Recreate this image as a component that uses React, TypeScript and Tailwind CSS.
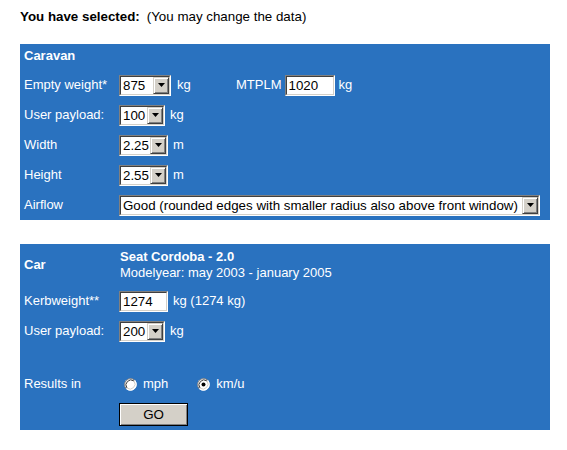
import React from "react";

function Arrow() {
  return (
    <svg width="7" height="4" viewBox="0 0 7 4">
      <path d="M0 0H7L3.5 4Z" fill="#000" />
    </svg>
  );
}

function Select({ value, className }: { value: string; className: string }) {
  return (
    <div
      className={
        "flex h-[21px] shrink-0 border border-t-[#808080] border-l-[#808080] border-b-white border-r-white bg-white text-[13.33px] " +
        className
      }
    >
      <div className="flex min-w-0 flex-1 border border-t-[#404040] border-l-[#404040] border-b-[#d4d0c8] border-r-[#d4d0c8]">
        <span className="flex-1 overflow-hidden whitespace-nowrap pl-[2px] leading-[17px] text-black">{value}</span>
        <div className="flex h-[17px] w-[16px] shrink-0 items-center justify-center border border-t-[#d4d0c8] border-l-[#d4d0c8] border-b-[#404040] border-r-[#404040] bg-[#d4d0c8] shadow-[inset_1px_1px_0_#fff,inset_-1px_-1px_0_#808080]">
          <Arrow />
        </div>
      </div>
    </div>
  );
}

function Input({ value, className }: { value: string; className: string }) {
  return (
    <div
      className={
        "flex h-[21px] shrink-0 border border-t-[#808080] border-l-[#808080] border-b-white border-r-white bg-white text-[13.33px] " +
        className
      }
    >
      <div className="flex-1 border border-t-[#404040] border-l-[#404040] border-b-[#d4d0c8] border-r-[#d4d0c8] pl-[2px] leading-[17px] text-black">
        {value}
      </div>
    </div>
  );
}

function Radio({ checked }: { checked?: boolean }) {
  return (
    <svg width="13" height="13" viewBox="0 0 13 13" className="shrink-0">
      <circle cx="6.5" cy="6.5" r="6" fill="#fff" />
      <path d="M2.26 10.74A6 6 0 0 1 10.74 2.26" fill="none" stroke="#808080" strokeWidth="1" />
      <path d="M3 10A5 5 0 0 1 10 3" fill="none" stroke="#404040" strokeWidth="1" />
      <path d="M10.74 2.26A6 6 0 0 1 2.26 10.74" fill="none" stroke="#fff" strokeWidth="1" />
      <path d="M10 3A5 5 0 0 1 3 10" fill="none" stroke="#d4d0c8" strokeWidth="1" />
      {checked && <circle cx="6.5" cy="6.5" r="2" fill="#000" />}
    </svg>
  );
}

function Row({ label, children, h = "h-[30px]" }: { label: string; children?: React.ReactNode; h?: string }) {
  return (
    <div className={"flex items-center " + h}>
      <div className="w-[99px] shrink-0 whitespace-nowrap pl-1">{label}</div>
      <div className="flex items-center">{children}</div>
    </div>
  );
}

export default function App() {
  return (
    <div className="h-[450px] w-[567px] bg-white font-['Liberation_Sans',Arial,sans-serif] text-[13px] leading-4">
      <div className="whitespace-nowrap pl-5 pt-[9px] text-[13.33px] text-black">
        <span className="font-bold">You have selected:</span>
        <span className="ml-[7px]">(You may change the data)</span>
      </div>

      <div className="ml-5 mt-[19px] w-[530px] bg-[#2a72bf] text-white">
        <div className="flex h-[26px] items-center pb-[2px] pl-1 font-bold">Caravan</div>
        <Row label="Empty weight*">
          <div className="flex w-[117px] items-center">
            <Select value="875" className="w-[52px]" />
            <span className="ml-[6px]">kg</span>
          </div>
          <span>MTPLM</span>
          <Input value="1020" className="ml-[3px] w-[50px]" />
          <span className="ml-1">kg</span>
        </Row>
        <Row label="User payload:">
          <Select value="100" className="w-[46px]" />
          <span className="ml-[5px]">kg</span>
        </Row>
        <Row label="Width">
          <Select value="2.25" className="w-[49px]" />
          <span className="ml-[5px]">m</span>
        </Row>
        <Row label="Height">
          <Select value="2.55" className="w-[49px]" />
          <span className="ml-[5px]">m</span>
        </Row>
        <Row label="Airflow">
          <Select
            value="Good (rounded edges with smaller radius also above front window)"
            className="w-[421px]"
          />
        </Row>
      </div>

      <div className="ml-5 mt-6 w-[530px] bg-[#2a72bf] text-white">
        <div className="flex h-[42px] items-center">
          <div className="w-[99px] shrink-0 pl-1 font-bold">Car</div>
          <div className="flex flex-col pl-[1px]">
            <span className="font-bold">Seat Cordoba - 2.0</span>
            <span>Modelyear: may 2003 - january 2005</span>
          </div>
        </div>
        <Row label="Kerbweight**">
          <Input value="1274" className="w-[49px]" />
          <span className="ml-[5px]">kg (1274 kg)</span>
        </Row>
        <Row label="User payload:">
          <Select value="200" className="w-[46px]" />
          <span className="ml-[5px]">kg</span>
        </Row>
        <div className="h-[23px]" />
        <Row label="Results in">
          <div className="ml-[5px] flex items-center">
            <Radio />
            <span className="ml-[6px]">mph</span>
          </div>
          <div className="ml-[29px] flex items-center">
            <Radio checked />
            <span className="ml-[6px]">km/u</span>
          </div>
        </Row>
        <div className="flex h-[31px] items-center pl-[99px]">
          <button className="flex h-[23px] w-[69px] items-center justify-center border border-black bg-[#d4d0c8] text-[13.33px] text-black shadow-[inset_1px_1px_0_#fff,inset_-1px_-1px_0_#808080]">
            GO
          </button>
        </div>
      </div>
    </div>
  );
}
